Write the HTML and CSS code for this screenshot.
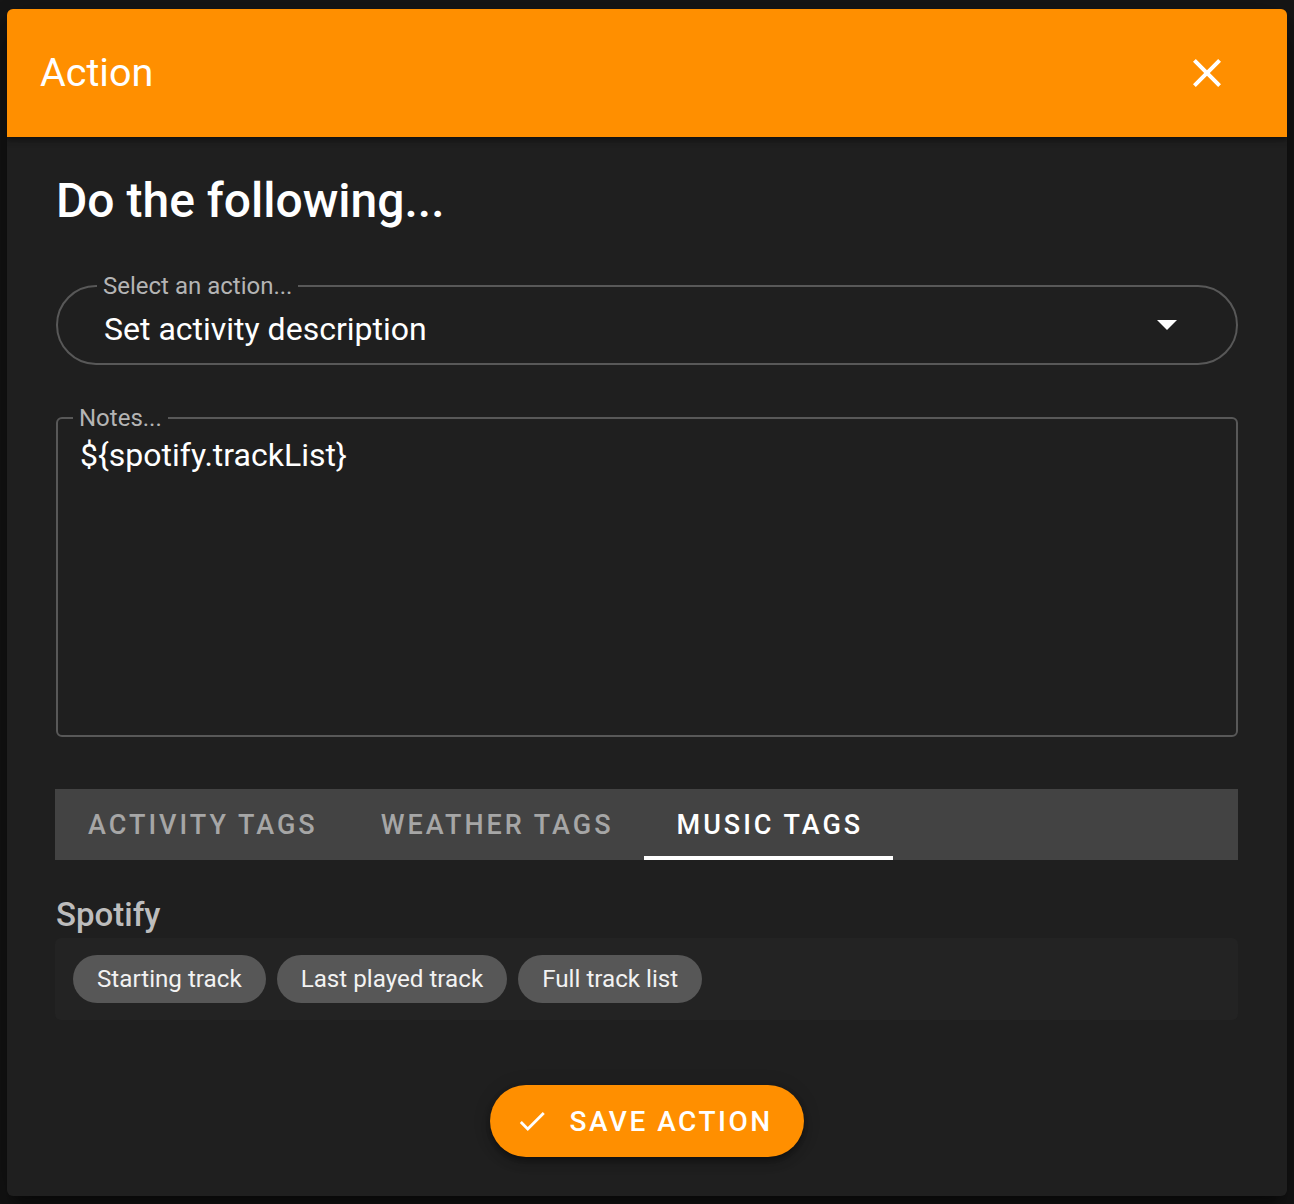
FILE: index.html
```html
<!DOCTYPE html>
<html lang="en">
<head>
<meta charset="utf-8">
<title>Action</title>
<link rel="stylesheet" href="styles.css">
</head>
<body>
<div class="dialog">
  <header class="bar">
    <h1 class="bar-title">Action</h1>
    <button class="close" aria-label="Close">
      <svg width="48" height="48" viewBox="0 0 24 24"><path fill="#fff" d="M19 6.41L17.59 5 12 10.59 6.41 5 5 6.41 10.59 12 5 17.59 6.41 19 12 13.41 17.59 19 19 17.59 13.41 12z"/></svg>
    </button>
  </header>
  <main class="content">
    <h2 class="heading">Do the following...</h2>

    <fieldset class="field field-select">
      <legend class="field-label">Select an action...</legend>
      <div class="select-row">
        <span class="select-value">Set activity description</span>
        <svg class="drop" width="20" height="10" viewBox="0 0 20 10"><polygon fill="#fff" points="0,0 20,0 10,10"/></svg>
      </div>
    </fieldset>

    <fieldset class="field field-notes">
      <legend class="field-label">Notes...</legend>
      <div class="notes-value">${spotify.trackList}</div>
    </fieldset>

    <nav class="tabs">
      <div class="tab">ACTIVITY TAGS</div>
      <div class="tab">WEATHER TAGS</div>
      <div class="tab tab-active">MUSIC TAGS</div>
    </nav>

    <h3 class="group-title">Spotify</h3>
    <div class="chips">
      <span class="chip">Starting track</span>
      <span class="chip">Last played track</span>
      <span class="chip">Full track list</span>
    </div>

    <div class="actions">
      <button class="save">
        <svg width="34" height="34" viewBox="0 0 24 24"><path fill="#fff" d="M9 16.17L4.83 12l-1.42 1.41L9 19 21 7l-1.41-1.41z"/></svg>
        <span>SAVE ACTION</span>
      </button>
    </div>
  </main>
</div>
</body>
</html>
```

FILE: styles.css
```css
* { box-sizing: border-box; }

html, body {
  margin: 0;
  padding: 0;
  background: #171717;
  font-family: Roboto, "Liberation Sans", sans-serif;
  color: #fff;
}

body {
  padding: 9px 7px 8px 7px;
}

.dialog {
  width: 1280px;
  height: 1187px;
  background: #1f1f1f;
  border-radius: 6px;
  overflow: hidden;
  box-shadow: 0 11px 15px -7px rgba(0,0,0,.4), 0 24px 38px 3px rgba(0,0,0,.3), 0 9px 46px 8px rgba(0,0,0,.25);
  display: flex;
  flex-direction: column;
}

.bar {
  position: relative;
  z-index: 1;
  height: 128px;
  flex: none;
  background: #ff8f00;
  display: flex;
  align-items: center;
  justify-content: space-between;
  padding: 0 56px 0 33px;
  box-shadow: 0 2px 4px -1px rgba(0,0,0,.3), 0 4px 5px 0 rgba(0,0,0,.2), 0 1px 10px 0 rgba(0,0,0,.18);
}

.bar-title {
  margin: 0;
  font-size: 39.5px;
  font-weight: 400;
  line-height: 1;
  color: #fff;
}

.close {
  border: 0;
  background: none;
  padding: 0;
  width: 48px;
  height: 48px;
  display: flex;
  cursor: pointer;
}

.content {
  padding: 36px 49px 0 49px;
  display: flex;
  flex-direction: column;
}

.heading {
  margin: 0;
  font-size: 48px;
  font-weight: 500;
  line-height: 56px;
  color: #fff;
}

.field {
  margin: 0;
  border: 2px solid #585858;
  padding: 0 46px;
  min-width: 0;
}

.field-label {
  font-size: 24px;
  line-height: 26px;
  color: #b4b4b4;
  padding: 0 6px;
  margin-left: -7px;
}

.field-select {
  margin-top: 44px;
  height: 92px;
  border-radius: 40px;
  padding-right: 46px;
}

.select-row {
  display: flex;
  align-items: center;
  justify-content: space-between;
  height: 60px;
}

.select-value {
  font-size: 32px;
  line-height: 60px;
}

.drop {
  margin-right: 13px;
  margin-top: -8px;
}

.field-notes {
  margin-top: 40px;
  height: 332px;
  border-radius: 6px;
  padding: 0 22px;
}

.notes-value {
  font-size: 32px;
  line-height: 36px;
  padding-top: 6px;
}

.tabs {
  margin: 52px 0 0 -1px;
  height: 71px;
  background: #434343;
  display: flex;
}

.tab {
  height: 71px;
  display: flex;
  align-items: center;
  padding: 4px 30px 0 33px;
  font-size: 27px;
  font-weight: 500;
  letter-spacing: 3px;
  color: #a6a6a6;
  border-bottom: 4px solid transparent;
}

.tab-active {
  color: #fff;
  border-bottom-color: #fff;
}

.group-title {
  margin: 37px 0 0 0;
  font-size: 33px;
  font-weight: 500;
  line-height: 36px;
  color: #bdbdbd;
}

.chips {
  margin: 5px 0 0 -1px;
  background: #232323;
  border-radius: 6px;
  padding: 17px 18px;
  display: flex;
  gap: 11px;
}

.chip {
  height: 48px;
  display: flex;
  align-items: center;
  padding: 0 24px;
  border-radius: 24px;
  background: #575757;
  font-size: 24.2px;
  color: #f2f2f2;
}

.actions {
  margin-top: 65px;
  display: flex;
  justify-content: center;
}

.save {
  height: 72px;
  border: 0;
  border-radius: 36px;
  background: #ff8f00;
  color: #fff;
  display: flex;
  align-items: center;
  gap: 20px;
  padding: 0 31px 0 25px;
  font-family: Roboto, "Liberation Sans", sans-serif;
  font-size: 28px;
  font-weight: 500;
  letter-spacing: 2.5px;
  box-shadow: 0 3px 5px -1px rgba(0,0,0,.3), 0 6px 10px 0 rgba(0,0,0,.2), 0 1px 18px 0 rgba(0,0,0,.15);
  cursor: pointer;
}
```
